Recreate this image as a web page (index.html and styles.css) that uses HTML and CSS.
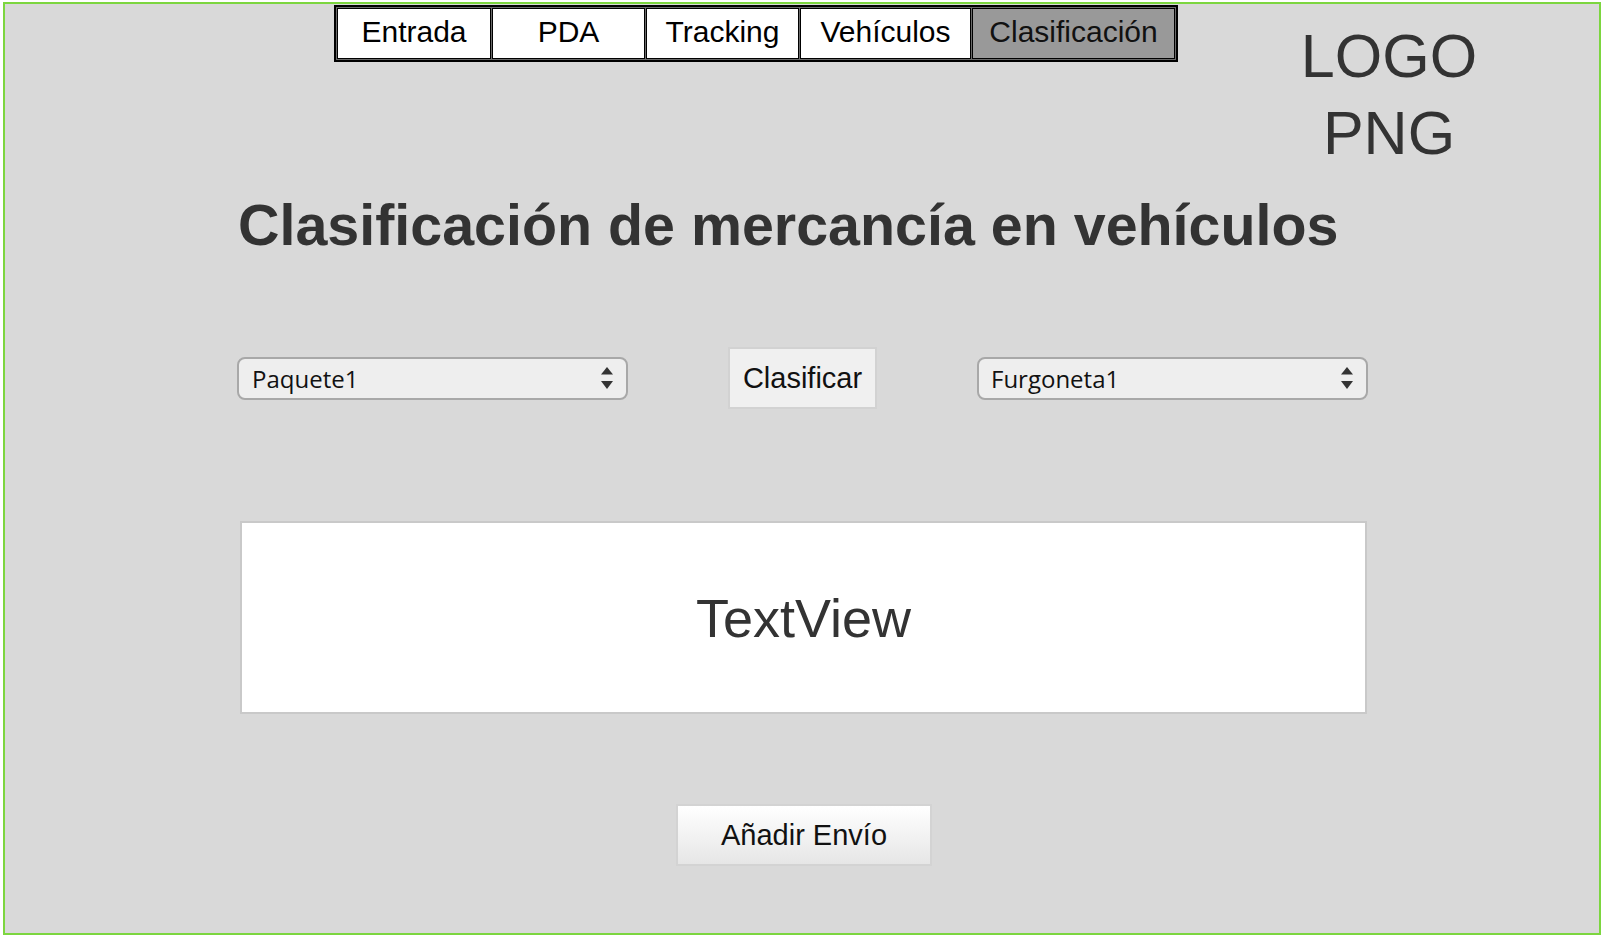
FILE: index.html
```html
<!DOCTYPE html>
<html lang="es">
<head>
<meta charset="utf-8">
<title>Clasificación</title>
<link rel="stylesheet" href="styles.css">
</head>
<body>
<div class="frame">
  <header class="top">
    <nav class="tabs">
      <a class="tab tab-entrada">Entrada</a>
      <a class="tab tab-pda">PDA</a>
      <a class="tab tab-tracking">Tracking</a>
      <a class="tab tab-vehiculos">Vehículos</a>
      <a class="tab tab-clasif active">Clasificación</a>
    </nav>
    <div class="logo">LOGO<br>PNG</div>
  </header>
  <main class="content">
    <h1 class="title">Clasificación de mercancía en vehículos</h1>
    <div class="controls">
      <div class="select select-left">
        <span class="select-text">Paquete1</span>
        <svg class="arrows" width="12" height="22" viewBox="0 0 12 22"><polygon points="0,7.5 6,0 12,7.5" fill="#333"/><polygon points="0,14 12,14 6,22" fill="#333"/></svg>
      </div>
      <button class="btn btn-clasificar">Clasificar</button>
      <div class="select select-right">
        <span class="select-text">Furgoneta1</span>
        <svg class="arrows" width="12" height="22" viewBox="0 0 12 22"><polygon points="0,7.5 6,0 12,7.5" fill="#333"/><polygon points="0,14 12,14 6,22" fill="#333"/></svg>
      </div>
    </div>
    <div class="textview">TextView</div>
    <div class="actions">
      <button class="btn btn-add">Añadir Envío</button>
    </div>
  </main>
</div>
</body>
</html>
```
FILE: styles.css
```css
html, body {
  margin: 0;
  padding: 0;
  background: #ffffff;
}
body {
  width: 1606px;
  height: 940px;
  overflow: hidden;
  font-family: "Liberation Sans", Arial, sans-serif;
}
.frame {
  margin: 2px 0 0 3px;
  width: 1594px;
  height: 929px;
  border: 2px solid #7cd63f;
  background: #d9d9d9;
  display: flex;
  flex-direction: column;
}
.top {
  display: flex;
  align-items: flex-start;
  padding-left: 329px;
}
.tabs {
  margin-top: 1px;
  display: flex;
  gap: 1px;
  padding: 1px;
  border: 2px solid #000;
  background: #6a6a6a;
}
.tab {
  box-sizing: border-box;
  border: 1px solid #000;
  background: #ffffff;
  color: #000;
  font-size: 30px;
  line-height: 45px;
  padding-bottom: 4px;
  text-align: center;
  white-space: nowrap;
}
.tab-entrada { width: 154px; }
.tab-pda { width: 153px; }
.tab-tracking { width: 153px; }
.tab-vehiculos { width: 171px; }
.tab-clasif { width: 203px; }
.tab.active {
  background: #999999;
  color: #111;
}
.logo {
  margin-top: 14px;
  margin-left: 111px;
  width: 200px;
  text-align: center;
  font-size: 61px;
  line-height: 77px;
  color: #333;
}
.content {
  padding-left: 232px;
  width: 1131px;
  display: flex;
  flex-direction: column;
}
.title {
  margin: 20px 0 0 1px;
  font-size: 57.4px;
  line-height: 66px;
  font-weight: bold;
  color: #333;
  white-space: nowrap;
}
.controls {
  margin-top: 89px;
  display: flex;
  align-items: center;
  gap: 100px;
  height: 62px;
}
.select {
  box-sizing: border-box;
  width: 391px;
  height: 43px;
  border: 2px solid #a8a8a8;
  border-radius: 8px;
  background: #eeeeee;
  display: flex;
  align-items: center;
  justify-content: space-between;
  padding: 0 13px 0 13px;
}
.select-right {
  padding-left: 12px;
}
.select-text {
  font-family: "Open Sans", "Liberation Sans", sans-serif;
  font-size: 24px;
  color: #111;
}
.arrows {
  display: block;
}
.btn {
  box-sizing: border-box;
  font-family: "Liberation Sans", Arial, sans-serif;
  font-size: 29px;
  color: #111;
  padding: 0;
  margin: 0;
}
.btn-clasificar {
  width: 149px;
  height: 62px;
  border: 2px solid #d2d2d2;
  background: #f0f0f0;
}
.textview {
  box-sizing: border-box;
  margin: 112px 0 0 3px;
  width: 1127px;
  height: 193px;
  border: 2px solid #c9c9c9;
  background: #ffffff;
  display: flex;
  align-items: center;
  justify-content: center;
  font-size: 54px;
  color: #333;
}
.actions {
  margin-top: 90px;
  display: flex;
  padding-left: 439px;
}
.btn-add {
  width: 256px;
  height: 62px;
  border: 2px solid #d3d3d3;
  background: linear-gradient(#ffffff, #e6e6e6);
}
```
